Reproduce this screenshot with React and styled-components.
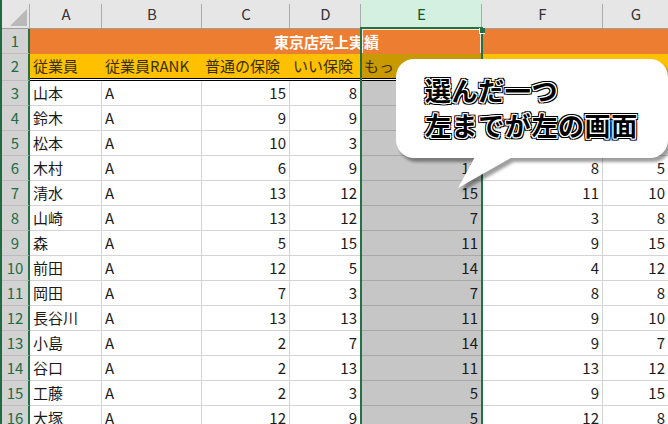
import styled, { createGlobalStyle } from "styled-components";

const GlobalStyle = createGlobalStyle`
  html, body { margin: 0; padding: 0; background: #fff; }
  body {
    font-family: "Noto Sans CJK JP", "Noto Sans", sans-serif;
    overflow: hidden;
  }
`;

const GREEN = "#217346";

const COLS = [
  { key: "A", w: 72 },
  { key: "B", w: 100 },
  { key: "C", w: 88 },
  { key: "D", w: 71 },
  { key: "E", w: 121, sel: true },
  { key: "F", w: 121 },
  { key: "G", w: 66 },
];

const HEADS = ["従業員", "従業員RANK", "普通の保険", "いい保険", "もっ", "", ""];

// cells under the callout are left blank, they can't be seen anyway
const ROWS = [
  ["山本", "A", 15, 8, "", "", ""],
  ["鈴木", "A", 9, 9, "", "", ""],
  ["松本", "A", 10, 3, "", "", ""],
  ["木村", "A", 6, 9, 12, 8, 5],
  ["清水", "A", 13, 12, 15, 11, 10],
  ["山崎", "A", 13, 12, 7, 3, 8],
  ["森", "A", 5, 15, 11, 9, 15],
  ["前田", "A", 12, 5, 14, 4, 12],
  ["岡田", "A", 7, 3, 7, 8, 8],
  ["長谷川", "A", 13, 13, 11, 9, 10],
  ["小島", "A", 2, 7, 14, 9, 7],
  ["谷口", "A", 2, 13, 11, 13, 12],
  ["工藤", "A", 2, 3, 5, 9, 15],
  ["大塚", "A", 12, 9, 5, 12, 8],
];

const Window = styled.div`
  position: relative;
  width: 668px;
  height: 424px;
  box-sizing: border-box;
  border-left: 2px solid #1e6b42;
  overflow: hidden;
  background: #fff;
  font-size: 15px;
`;

const Sheet = styled.div`
  display: flex;
  flex-direction: column;
  width: 700px;
`;

const Row = styled.div`
  display: flex;
  height: ${(p) => p.$h || 25}px;
  background: #fff;
`;

const HeaderRow = styled.div`
  display: flex;
  height: 29px;
  box-sizing: border-box;
  border-bottom: 1px solid #9e9e9e;
  background: #e6e6e6;
`;

const Corner = styled.div`
  width: 28px;
  flex: none;
  display: flex;
  align-items: flex-end;
  justify-content: flex-end;
  padding: 0 3px 2px 0;
  box-sizing: border-box;
  background: linear-gradient(#ababab, #ababab) right 4px / 1px calc(100% - 4px) no-repeat, #e6e6e6;
`;

const Triangle = styled.div`
  width: 17px;
  height: 17px;
  background: #b9b9b9;
  clip-path: polygon(100% 0, 100% 100%, 0 100%);
`;

const ColHead = styled.div`
  width: ${(p) => p.$w}px;
  flex: none;
  text-align: center;
  line-height: 28px;
  color: ${(p) => (p.$sel ? "#0d5a30" : "#333")};
  background: linear-gradient(#ababab, #ababab) right 4px / 1px calc(100% - 4px) no-repeat,
    ${(p) => (p.$sel ? "#d3f0e0" : "#e6e6e6")};
`;

const RowHead = styled.div`
  width: 28px;
  flex: none;
  box-sizing: border-box;
  border-right: 2px solid ${GREEN};
  border-bottom: 1px solid #bcbcbc;
  background: #d2d2d2;
  color: #1f6b44;
  text-align: center;
  line-height: 24px;
`;

const TitleCell = styled.div`
  flex: 1;
  background: #ed7d31;
  color: #fff;
  font-weight: 700;
  line-height: 25px;
  padding-left: 244px;
  white-space: nowrap;
`;

const HeadCell = styled.div`
  width: ${(p) => p.$w}px;
  flex: none;
  box-sizing: border-box;
  padding: 0 3px;
  background: ${(p) => (p.$sel ? "#c99a00" : "#ffc000")};
  background-clip: padding-box;
  border-bottom: 3px double #000;
  color: #3a2f00;
  line-height: 24px;
  white-space: nowrap;
  overflow: hidden;
`;

const Cell = styled.div`
  width: ${(p) => p.$w}px;
  flex: none;
  box-sizing: border-box;
  padding: 0 3px;
  border-right: 1px solid ${(p) => (p.$sel ? "#a8a8a8" : "#d4d4d4")};
  border-bottom: 1px solid ${(p) => (p.$sel ? "#a8a8a8" : "#d4d4d4")};
  background: ${(p) => (p.$sel ? "#c6c6c6" : "#fff")};
  color: #1a1a1a;
  text-align: ${(p) => (p.$num ? "right" : "left")};
  line-height: 24px;
  white-space: nowrap;
`;

const Frame = styled.div`
  position: absolute;
  left: 358px;
  top: 27px;
  width: 123px;
  bottom: -4px;
  box-sizing: border-box;
  border: 2px solid ${GREEN};
  border-bottom: none;
  pointer-events: none;
`;

const ActiveCell = styled.div`
  position: absolute;
  top: 0;
  left: 0;
  right: 0;
  height: 24px;
  box-sizing: border-box;
  border: 1px solid rgba(255, 255, 255, 0.8);
  border-bottom: none;
`;

const Handle = styled.div`
  position: absolute;
  top: -1px;
  right: -4px;
  width: 6px;
  height: 6px;
  box-sizing: border-box;
  background: ${GREEN};
  border-left: 1px solid #fff;
  border-bottom: 1px solid #fff;
`;

const Callout = styled.div`
  position: absolute;
  left: 388px;
  top: 55px;
  width: 282px;
  height: 140px;
`;

const Bubble = styled.svg`
  display: block;
  filter: drop-shadow(3px 4px 1.5px rgba(0, 0, 0, 0.38));
`;

const Label = styled.div`
  position: absolute;
  left: 35px;
  top: 17px;
  font-size: 26px;
  font-weight: 700;
  line-height: 35px;
  letter-spacing: 0.6px;
  color: #000;
  white-space: nowrap;
  text-shadow: 1px 0 #fff, -1px 0 #fff, 0 1px #fff, 0 -1px #fff, 1px 1px #fff,
    -1px -1px #fff, 1px -1px #fff, -1px 1px #fff, 2px 0 #000, -2px 0 #000,
    0 2px #000, 0 -2px #000, 2px 2px #000, -2px -2px #000, 2px -2px #000,
    -2px 2px #000;
`;

export default function App() {
  return (
    <>
      <GlobalStyle />
      <Window>
        <Sheet>
          <HeaderRow>
            <Corner>
              <Triangle />
            </Corner>
            {COLS.map((c) => (
              <ColHead key={c.key} $w={c.w} $sel={c.sel}>
                {c.key}
              </ColHead>
            ))}
          </HeaderRow>

          <Row>
            <RowHead>1</RowHead>
            <TitleCell>東京店売上実績</TitleCell>
          </Row>

          <Row $h={27}>
            <RowHead>2</RowHead>
            {COLS.map((c, i) => (
              <HeadCell key={c.key} $w={c.w} $sel={c.sel}>
                {HEADS[i]}
              </HeadCell>
            ))}
          </Row>

          {ROWS.map((r, ri) => (
            <Row key={ri}>
              <RowHead>{ri + 3}</RowHead>
              {COLS.map((c, i) => (
                <Cell key={c.key} $w={c.w} $sel={c.sel} $num={typeof r[i] === "number"}>
                  {r[i]}
                </Cell>
              ))}
            </Row>
          ))}
        </Sheet>

        <Frame>
          <ActiveCell />
          <Handle />
        </Frame>

        <Callout>
          <Bubble width="282" height="140" viewBox="0 0 282 140">
            <g fill="#fff">
              <rect x="6" y="4" width="272" height="99" rx="18" />
              <polygon points="86,100 68,133 126,100" />
            </g>
          </Bubble>
          <Label>
            選んだ一つ
            <br />
            左までが左の画面
          </Label>
        </Callout>
      </Window>
    </>
  );
}
